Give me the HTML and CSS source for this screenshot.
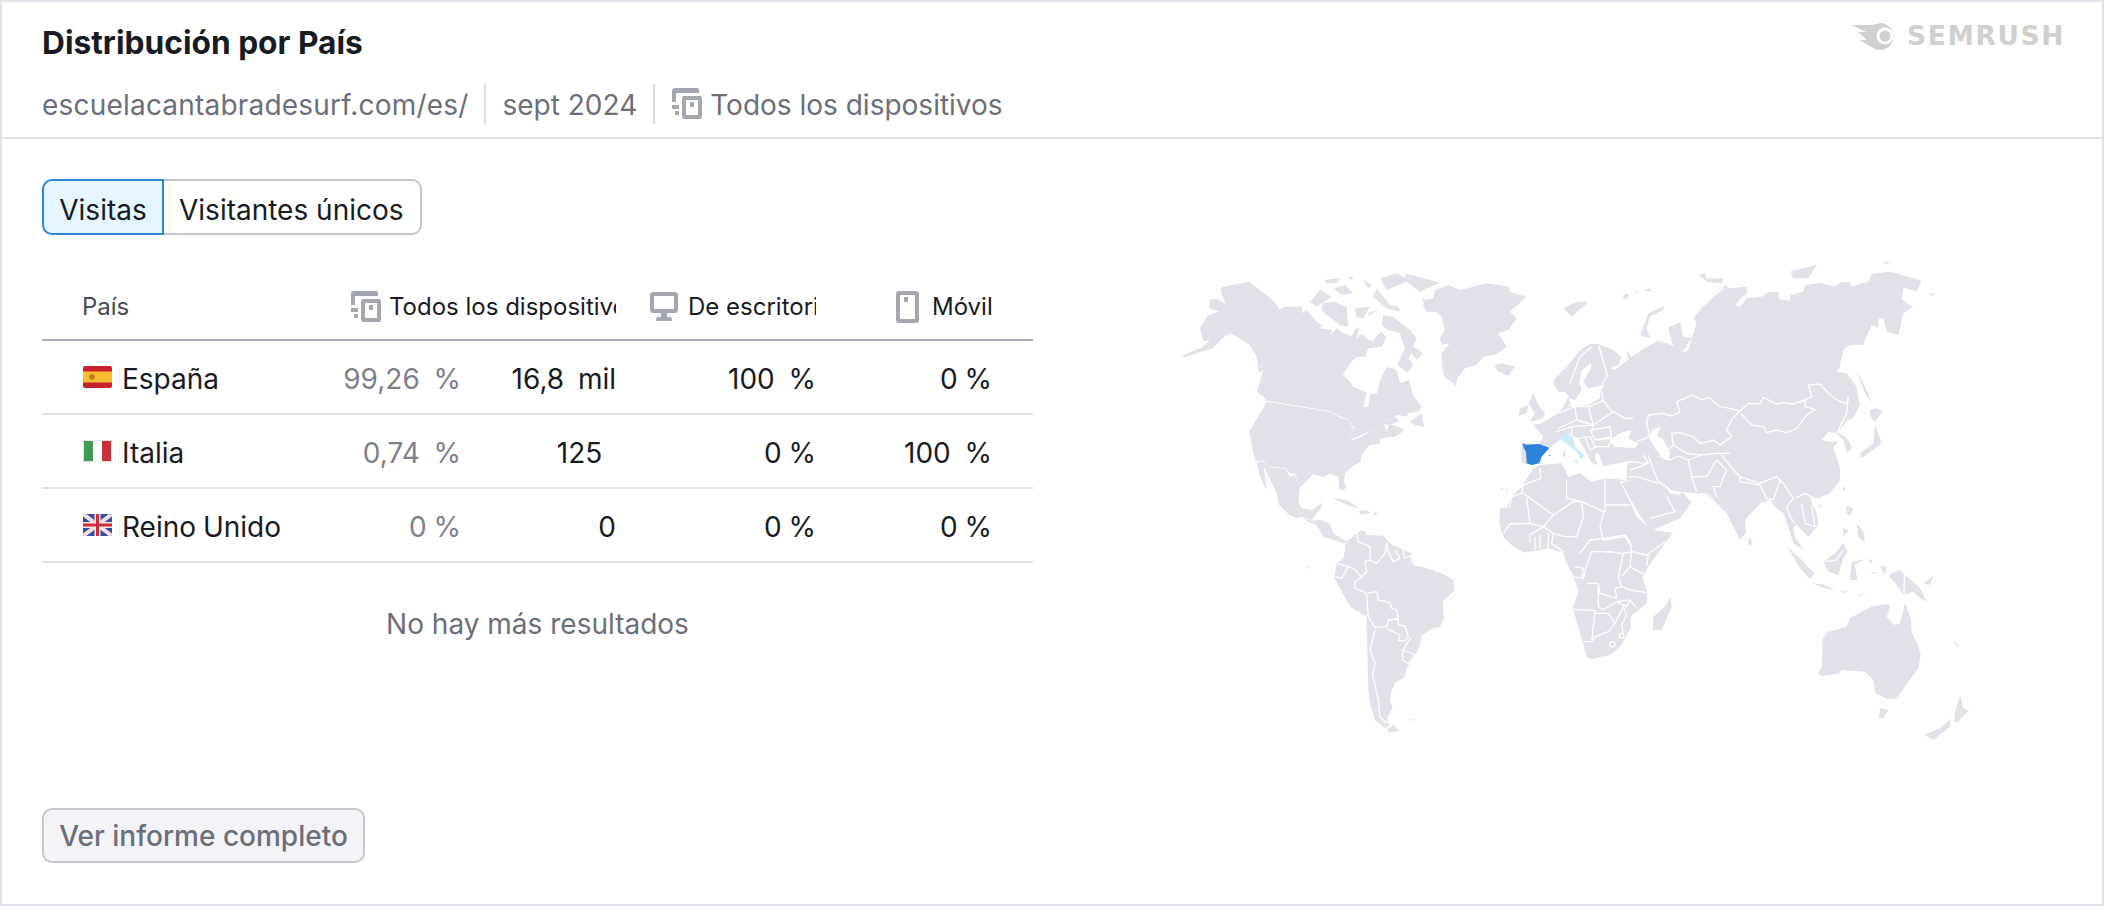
FILE: index.html
```html
<!DOCTYPE html>
<html lang="es">
<head>
  <meta charset="UTF-8" />
  <title>Distribución por País</title>
  <link rel="stylesheet" href="styles.css">
</head>
<body>
  <div class="card">
    <header class="top">
      <div>
        <h2 class="title">Distribución por País</h2>
        <div class="meta">
          <span class="site">escuelacantabradesurf.com/es/</span>
          <span class="sep"></span>
          <span>sept 2024</span>
          <span class="sep"></span>
          <svg class="ico-dev ico-meta" viewBox="0 0 31 31"><path d="M1 3Q1 0 4 0H26Q28 0 28 2V5H5V14H1ZM1 17H8V21H1ZM4 23H8V27H4Z"/><path fill-rule="evenodd" d="M13 8H29Q31 8 31 10V29Q31 31 29 31H13Q11 31 11 29V10Q11 8 13 8ZM15 12V27H27V12ZM19 14H23V19H19Z"/></svg>
          <span>Todos los dispositivos</span>
        </div>
      </div>
      <div class="logo">
        <svg class="logo-mark" viewBox="0 0 46 28"><path d="M0 3H20L29 1A13.500 13.500 0 1 1 23 27L7 18H15L6 10H14Z"/><circle class="logo-hole" cx="33" cy="14" r="8.500"/><circle cx="33" cy="14" r="5.500"/></svg>
        <span>SEMRUSH</span>
      </div>
    </header>

    <main class="body">
      <section class="left">
        <div class="tabs">
          <button class="tab tab-on">Visitas</button>
          <button class="tab">Visitantes únicos</button>
        </div>

        <div class="table">
          <div class="row head">
            <div class="cell-name">País</div>
            <div class="th th-all">
              <svg class="ico-dev" viewBox="0 0 31 31"><path d="M1 3Q1 0 4 0H26Q28 0 28 2V5H5V14H1ZM1 17H8V21H1ZM4 23H8V27H4Z"/><path fill-rule="evenodd" d="M13 8H29Q31 8 31 10V29Q31 31 29 31H13Q11 31 11 29V10Q11 8 13 8ZM15 12V27H27V12ZM19 14H23V19H19Z"/></svg>
              Todos los dispositivos
            </div>
            <div class="th th-desk">
              <svg class="ico-desk" viewBox="0 0 28 29"><path fill-rule="evenodd" d="M3 0H25Q28 0 28 3V18Q28 21 25 21H3Q0 21 0 18V3Q0 0 3 0ZM4 4V17H24V4ZM11 21H17V25H20Q22 25 22 29H6Q6 25 8 25H11Z"/></svg>
              De escritorio
            </div>
            <div class="th th-mob">
              <svg class="ico-mob" viewBox="0 0 23 32"><path fill-rule="evenodd" d="M3 0H20Q23 0 23 3V29Q23 32 20 32H3Q0 32 0 29V3Q0 0 3 0ZM4 4V28H19V4ZM8 6H12V11H8Z"/></svg>
              Móvil
            </div>
          </div>

          <div class="row">
            <div class="cell-name">
              <svg class="flag" viewBox="0 0 29 22"><rect width="29" height="22" fill="#c8202d"/><rect y="5.500" width="29" height="11" fill="#f5bd2f"/><circle cx="9" cy="11" r="2.800" fill="#c0752a"/></svg>
              España
            </div>
            <div class="num share">99,26  %</div>
            <div class="num">16,8  mil</div>
            <div class="num">100  %</div>
            <div class="num">0 %</div>
          </div>

          <div class="row">
            <div class="cell-name">
              <svg class="flag" viewBox="0 0 29 22"><rect width="29" height="22" fill="#fff"/><rect width="10" height="22" fill="#3f9b57"/><rect x="19" width="10" height="22" fill="#c4303c"/><rect x=".5" y=".5" width="28" height="21" fill="none" stroke="#e0e1e9"/></svg>
              Italia
            </div>
            <div class="num share">0,74  %</div>
            <div class="num">125  </div>
            <div class="num">0 %</div>
            <div class="num">100  %</div>
          </div>

          <div class="row">
            <div class="cell-name">
              <svg class="flag" viewBox="0 0 29 22"><rect width="29" height="22" fill="#33509c"/><path d="M0 0L29 22M29 0L0 22" stroke="#f0dfe2" stroke-width="4"/><path d="M14.500 0V22M0 11H29" stroke="#f0e6e8" stroke-width="6"/><path d="M14.500 0V22M0 11H29" stroke="#cf2a38" stroke-width="3"/></svg>
              Reino Unido
            </div>
            <div class="num share">0 %</div>
            <div class="num">0</div>
            <div class="num">0 %</div>
            <div class="num">0 %</div>
          </div>
        </div>

        <p class="nomore">No hay más resultados</p>
        <button class="more">Ver informe completo</button>
      </section>

      <svg class="map" viewBox="3360 750 2640 1500">
        <!-- América del Norte -->
        <g transform="translate(3360 750)">
          <path d="M303 112L388 95 463 155 388 280 402 297 418 300 430 358 418 368 408 315 388 285 358 265 330 250 300 270 280 295 190 322 185 318 245 292 270 272 250 272 240 235 262 198 297 185 268 175 268 150 290 146 318 162 303 130Z"/>
          <path d="M463 155L478 178 495 170 530 170 543 168 548 190 560 180 590 215 608 228 597 235 635 240 632 255 650 235 668 248 695 258 705 238 720 232 708 268 725 250 745 270 760 272 772 255 785 245 800 262 785 290 745 295 735 320 712 320 690 340 668 375 685 390 700 410 735 425 740 430 730 470 745 472 750 432 772 430 780 390 800 350 830 360 840 400 868 390 878 435 905 470 895 485 865 490 860 500 830 495 800 515 830 505 835 515 805 525 792 522 800 545 755 540 725 555 690 570 685 565 705 535 680 505 660 500 630 483 440 452 430 440 412 425 420 395 430 358 418 300 402 297 388 280Z"/>
          <path d="M440 455L630 485 660 503 680 507 703 537 685 565 692 572 725 560 755 540 800 545 808 522 835 530 855 540 825 560 780 565 780 580 750 585 725 612 722 635 695 650 675 670 672 695 680 710 670 722 658 718 655 680 630 672 610 682 580 672 540 712 525 670 510 670 495 655 445 650 430 632 408 632 400 610 388 545Z"/>
          <path d="M410 635L430 635 445 652 495 657 510 680 525 675 540 712 535 755 545 775 575 780 610 757 600 780 590 790 575 810 545 800 530 805 505 792 475 762 470 730 430 645 440 722 420 680Z"/>
          <path d="M545 800L575 812 600 810 630 820 640 850 680 875 670 880 640 870 610 860 590 825 565 815Z"/>
          <path d="M638 745L680 750 720 775 680 765ZM715 782L740 780 752 790 722 795ZM760 788L772 788 770 795 760 794Z"/>
          <path d="M830 345L862 368 880 345 865 325 875 310 890 330 910 310 880 290 890 265 870 240 850 225 820 200 790 195 785 225 805 240 840 250 855 295Z"/>
          <path d="M608 160L640 155 680 170 685 230 660 225 620 195 605 180ZM570 155L600 120 635 140 620 150 590 170ZM615 90L660 85 650 100 620 100ZM640 115L675 105 700 130 665 135ZM730 90L755 105 745 115ZM770 115L810 165 835 170 840 185 800 175 760 140ZM780 85L830 70 870 90 850 100 800 120ZM855 70L960 98 900 125 860 95ZM705 175L750 170 730 205 708 200ZM740 190L775 180 750 195ZM685 80L700 80 695 90ZM905 145L935 155 915 165Z"/>
          <path d="M870 515L905 490 912 530 885 525ZM805 495L835 505 815 520Z"/>
          <path d="M945 120L985 105 1020 120 1060 110 1100 100 1165 110 1170 125 1220 140 1170 185 1190 205 1165 240 1135 250 1160 290 1125 315 1090 320 1070 345 1035 355 1012 385 1008 408 995 395 975 385 965 345 965 310 990 280 965 285 960 265 975 240 965 200 950 185 920 185 908 165 915 150 940 145Z"/>
          <path d="M1122 345L1145 340 1185 350 1165 378 1135 365Z"/>
        </g>

        <!-- Eurasia -->
        <g transform="translate(4500 750)">
          <path d="M67 580L118 582 130 560 100 525 125 520 150 505 175 490 190 470 205 440 215 470 265 465 300 445 300 420 315 405 265 415 250 395 275 350 272 340 245 360 238 400 245 420 225 450 210 445 195 425 175 425 162 405 165 385 200 350 240 300 270 282 295 282 340 300 365 320 355 345 330 355 345 360 385 328 380 300 395 320 440 290 475 272 520 287 510 255 505 230 530 222 540 215 550 260 575 265 545 308 565 300 575 265 590 220 580 205 600 180 640 140 670 120 672 105 690 115 740 110 740 130 705 165 720 172 740 145 785 140 805 125 835 125 838 148 870 152 870 135 910 125 915 105 960 98 1005 110 1020 97 1050 97 1055 110 1105 95 1115 72 1170 65 1225 80 1240 85 1265 92 1250 125 1210 112 1205 148 1238 170 1210 190 1195 255 1160 245 1150 205 1135 208 1135 235 1115 225 1098 262 1090 285 1050 285 1030 300 1018 355 1010 365 1040 370 1070 410 1080 465 1060 505 1040 512 1022 535 1010 545 1040 565 1055 595 1040 605 1030 570 1010 550 985 545 965 570 985 575 1015 575 1000 590 1020 655 1020 690 990 730 955 745 930 745 950 790 955 825 925 860 905 840 890 825 880 830 885 860 910 900 880 880 862 820 850 790 825 770 810 750 780 760 735 810 738 850 720 870 680 790 650 760 620 730 580 730 545 725 575 755 540 805 460 840 450 840 410 780 365 700 380 690 380 660 385 635 310 650 300 620 290 605 285 625 295 645 275 640 255 600 235 565 215 555 200 548 180 570 150 590 125 620 118 640 95 645 65 640 65 595Z"/>
          <path class="sea" d="M340 562L370 545 395 540 385 565 415 580 405 595 345 590 330 575ZM455 540L485 530 470 555 490 570 510 610 505 630 490 628 470 600 450 570Z"/>
          <path class="sea" d="M490 695L510 720 545 725 540 735 510 730Z"/>
          <path class="sea" d="M385 690L392 692 375 695Z"/>
          <path class="line" d="M275 290L240 320 210 400M295 285L322 375 305 405M205 465L225 470 265 470 310 452 300 405M265 470L280 525 340 485 375 505 400 505M310 452L335 485M175 490L225 470 230 510 175 535M230 510L280 525 275 540 330 530 335 560 285 570 335 565 325 590 285 590 270 560 235 565M215 530L280 525M270 540L285 570M255 560L270 600 290 590M170 545L215 530 215 555"/>
          <path class="line" d="M450 560L440 520 445 495 490 490 515 498 540 485 530 455 578 435 605 450 625 442 660 470 690 475 720 483 745 460 780 462 790 442 830 462 850 458 880 462 915 450 935 440 925 405 960 402 990 435 1020 455 1040 460 1045 440 1040 490 1010 550M450 560L410 575M720 483L695 508 680 540 695 560 660 585 640 570 625 575 600 580 580 560 540 548 515 550 520 585 560 610 605 615M722 490L755 525 790 530 800 548 830 540 860 548 890 535 920 495 945 478 915 470 915 450"/>
          <path class="line" d="M445 615L460 660 475 695 510 720M520 585L480 620 510 630 535 618 565 630 575 680 590 725M565 630L605 615 650 610 690 610M575 680L620 680 650 630 680 660 660 710 640 710 650 740M665 615L700 660 720 680 780 700 830 680 850 700 880 745 860 770 870 800 885 820M720 680L720 695 780 705 800 745 820 750 840 690M885 745L915 730 945 745 935 770 945 830 915 820 905 760M310 650L390 635 445 640 430 615M390 660L445 640M385 680L410 680 475 700M450 805L525 785 500 740"/>
          <path d="M190 175L230 155 265 155 245 175 215 200ZM370 135L385 130 385 145 370 148ZM405 125L418 125 412 130ZM432 122L452 115 450 125ZM430 230L445 190 492 168 490 180 450 200 440 235 450 265 420 255ZM595 75L615 70 620 85 670 85 665 100 620 95ZM870 65L950 45 925 85 880 85ZM1150 35L1170 35 1158 45ZM1285 130L1305 132 1295 138ZM1068 360L1105 430 1115 458 1095 430ZM1110 480L1125 475 1150 482 1125 515 1112 505ZM1125 525L1145 580 1085 625 1080 610 1120 580ZM1035 705L1035 725 1028 715ZM1040 768L1060 775 1050 800 1040 790ZM960 760L968 770 955 772ZM1035 565L1050 575 1055 600 1040 605Z"/>
          <path d="M100 430L115 465 135 490 130 505 90 515 105 490 85 460ZM60 475L85 465 80 490 55 497Z"/>
          <path class="es" d="M67 580L78 584 118 582 148 593 125 620 118 640 95 645 80 640 78 605 72 595Z"/>
          <path class="es" d="M146 615L154 617 148 619ZM5 715L9 717 5 718ZM18 716L22 717 19 719Z"/>
          <path class="it" d="M180 560L200 548 218 560 225 590 252 615 245 630 225 600 200 580 185 572ZM220 630L235 632 230 640ZM190 605L198 605 196 620 188 620Z"/>
        </g>

        <!-- África -->
        <g transform="translate(4500 750)">
          <path d="M100 655L120 645 185 640 205 680 240 670 275 695 315 685 380 690 360 695 385 745 410 800 455 840 518 848 495 880 445 950 428 985 442 1028 440 1060 392 1100 392 1135 365 1185 330 1215 275 1228 260 1220 240 1150 218 1075 235 1025 220 975 200 940 190 908 145 895 110 902 70 907 40 890 10 860 -2 820 0 775 20 770 40 735 65 710Z"/>
          <path class="line" d="M120 655L122 685 70 705 65 730 35 740 30 770 0 772M70 730L160 795 220 755 245 755 312 785 300 830 310 870 375 860 395 890M80 745L90 820 30 822 10 850M200 690L200 745 245 755 250 800 240 830 230 860 190 860 160 850 130 830 160 795M315 685L315 785M315 765L390 765M90 820L130 830 90 855 90 880M105 860L105 900M120 855L120 895M145 850L145 895M160 850L155 880 190 905"/>
        </g>
        <g transform="translate(3660 1560)">
          <path class="line" d="M1090 180L1095 150 1115 95 1145 95 1210 100 1195 170 1205 200 1185 205 1190 235 1140 220 1135 190 1100 190M1135 190L1135 260 1150 270 1190 245 1230 240M1058 268L1125 272 1115 365 1090 365M1125 280L1165 280 1185 310 1165 335 1125 350 1115 365M1185 310L1210 260 1220 285 1205 315 1210 345M1190 245L1220 260 1230 240 1250 265M1205 200L1230 210 1280 218M1230 140L1275 165 1268 175M1235 95L1280 105 1335 65M1285 105L1280 140M1210 100L1235 95 1230 140 1205 170M1150 55L1215 45 1230 65 1235 95M1145 95L1180 95M1080 100L1110 60 1150 55M1065 140L1090 145 1085 175 1060 170"/>
          <circle class="line" cx="1177" cy="373" r="8"/>
          <circle class="line" cx="1205" cy="347" r="7"/>
          <path d="M1350 228L1355 260 1325 330 1298 330 1300 290 1340 255Z"/>
          <!-- América del Sur -->
          <path d="M425 30L435 35 440 45 490 47 510 70 550 90 575 100 580 135 620 145 670 162 702 180 702 212 668 245 672 295 660 322 640 325 605 345 600 380 570 430 560 445 555 470 525 490 515 510 510 545 518 560 500 600 510 615 495 625 465 600 458 575 450 550 445 510 440 290 390 260 343 175 350 130 370 115 380 65 410 40Z"/>
          <path d="M500 632L520 615 540 633 510 637ZM565 598L575 597 570 603ZM578 595L585 597 580 602ZM262 138L270 140 265 146Z"/>
          <path class="line" d="M410 40L415 65 450 80 450 120 435 125 440 155 425 170 400 145 385 140 365 175 345 170M350 130L385 140M450 120L470 130 495 100 500 70 505 95 520 125 540 115 525 90M548 90L555 115 575 105 575 130M425 170L405 185 405 205 430 215 440 225 445 290M440 220L470 215 475 240 510 248 515 265 530 270 535 295 505 300 500 320 465 322 445 290M505 300L535 298 535 315 555 318 565 350 555 362 535 362 540 345 500 325M465 330L450 390 465 430 458 465 475 540 480 590 500 610M548 390L588 405 565 430 548 420ZM573 352L550 388"/>
        </g>

        <!-- Oceanía y sudeste asiático -->
        <g transform="translate(5100 1560)">
          <path d="M520 258L565 252 570 262 560 290 585 315 600 310 615 250 632 295 635 335 655 380 662 405 655 445 625 485 590 535 560 537 525 520 520 480 495 455 425 450 415 462 365 468 355 458 365 440 368 355 385 335 440 320 450 295 495 270Z"/>
          <path d="M540 565L565 570 550 595 537 592ZM780 525L790 565 807 572 770 608 763 605 765 578ZM752 598L750 620 700 660 672 645 720 625Z"/>
          <path d="M565 165L600 150 615 165 660 205 680 245 660 235 640 215 610 225 590 195ZM370 125L410 95 430 70 442 95 430 115 415 165 385 155ZM262 80L300 115 342 160 330 178 300 145ZM338 190L375 195 405 210 375 205ZM455 125L495 118 465 135 472 180 450 180ZM150 52L158 72 148 78 143 65ZM505 115L518 125 510 132ZM540 140L560 138 555 165ZM515 155L535 160 515 160ZM470 10L490 35 495 70 475 50ZM430 25L445 30 430 50ZM670 190L700 168 690 195ZM760 360L778 380 770 380ZM420 212L445 215 430 220ZM475 225L498 218 480 228Z"/>
          <path class="line" d="M613 160L612 225M375 125L410 120 430 90"/>
        </g>
      </svg>
    </main>
  </div>
</body>
</html>
```

FILE: styles.css
```css
* { box-sizing:border-box; }
html, body { margin:0; height:100%; }
body { font-family:'Inter', 'Noto Sans', sans-serif; background:#fff; color:#191b23; }
.card { height:906px; border:2px solid #e0e1e9; display:flex; flex-direction:column; overflow:hidden; }

.top { height:137px; flex:none; border-bottom:2px solid #e0e1e9; padding:21px 40px 0; display:flex; justify-content:space-between; align-items:flex-start; }
.title { margin:0; font-size:31.7px; line-height:40px; font-weight:700; color:#191b23; }
.meta { display:flex; align-items:center; margin-top:19px; height:43px; padding-top:3px; font-size:28px; color:#6c6e79; }
.site { letter-spacing:.2px; }
.sep { width:2px; height:40px; background:#d9dae2; margin:-3px 16px 0; }
.ico-dev { width:31px; height:31px; fill:#a4a6b1; margin-right:8px; flex:none; }
.ico-meta { margin-top:-3px; }
.logo { display:flex; align-items:center; gap:9px; margin:-3px -3px 0 0; font-family:'DejaVu Sans', sans-serif; font-weight:700; font-size:26.5px; letter-spacing:1.600px; color:#d0d0d0; }
.logo-mark { width:46px; height:28px; fill:#d0d0d0; }
.logo-hole { fill:#fff; }

.body { flex:1; display:flex; padding:40px 0 0 40px; }
.left { width:991px; flex:none; display:flex; flex-direction:column; }
.tabs { display:flex; }
.tab { height:56px; font:400 28px 'Inter', sans-serif; color:#191b23; background:#fff; border:2px solid #c4c7cf; padding:5px 16px 0; }
.tab-on { width:122px; padding:5px 0 0; background:#e6f5ff; border-color:#2b84d8; border-radius:10px 0 0 10px; margin-right:-1px; position:relative; }
.tab:last-child { border-left:0; border-radius:0 10px 10px 0; }

.table { margin-top:38px; }
.row { height:74px; display:grid; grid-template-columns:300px 119px 155px 200px 176px; padding:3px 41px 0 0; align-items:center; border-bottom:2px solid #e0e1e9; font-size:28px; word-spacing:-1px; }
.head { height:68px; border-bottom-color:#a9abb6; font-size:24px; padding-top:3px; padding-bottom:2px; word-spacing:0; }
.head .cell-name { padding-left:40px; color:#484a54; }
.cell-name { padding-left:41px; display:flex; align-items:center; gap:10px; }
.flag { width:29px; height:22px; border-radius:2px; flex:none; margin-top:-3px; }
.th { display:flex; align-items:center; white-space:nowrap; overflow:hidden; line-height:36px; }
.th-all { grid-column:2 / 4; margin-left:8px; }
.th-desk { margin-left:34px; }
.th-mob { margin-left:80px; margin-right:-4px; overflow:visible; }
.ico-desk { width:28px; height:29px; fill:#a4a6b1; margin-right:10px; flex:none; }
.ico-mob { width:23px; height:32px; fill:#a4a6b1; margin-right:13px; flex:none; }
.num { text-align:right; white-space:pre; }
.share { color:#7d7f8b; }

.nomore { margin:43px 0 0; text-align:center; font-size:28px; line-height:36px; color:#6c6e79; }
.more { margin-top:auto; margin-bottom:41px; width:323px; height:55px; font:500 28px 'Inter', sans-serif; color:#6c6e79; background:#f4f4f8; border:2px solid #c4c7cf; border-radius:10px; padding:0; }

.map { width:880px; height:500px; flex:none; margin:71px 0 0 87px; }
.map path, .map circle { fill:#e0e1e9; stroke:none; }
.map .line { fill:none; stroke:#fff; stroke-width:4; stroke-linejoin:round; }
.map .sea { fill:#fff; }
.map .es { fill:#2b84d8; }
.map .it { fill:#cfe9ff; }
```
